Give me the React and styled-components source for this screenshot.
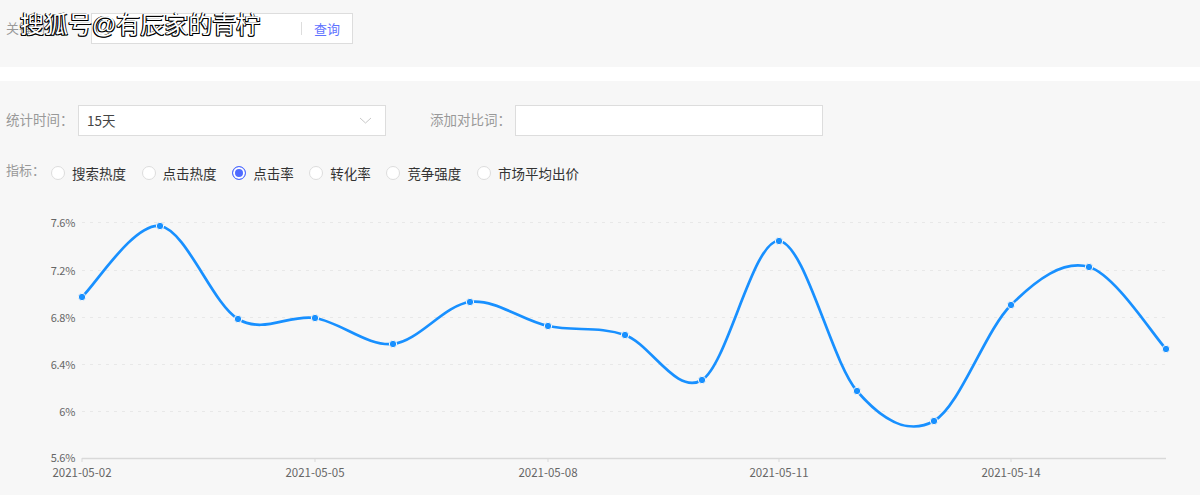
import React from 'react';
import styled, { createGlobalStyle } from 'styled-components';

const FONT = '"Noto Sans CJK SC", "Noto Sans", sans-serif';

const GlobalStyle = createGlobalStyle`
  html, body {
    margin: 0;
    padding: 0;
    background: #f7f7f7;
    font-family: ${FONT};
    overflow: hidden;
  }
`;

const metrics = [
  { name: '搜索热度' },
  { name: '点击热度' },
  { name: '点击率', checked: true },
  { name: '转化率' },
  { name: '竞争强度' },
  { name: '市场平均出价' },
];

const points = [
  [82, 297], [160, 226], [238, 319], [315, 318], [393, 344],
  [470, 302], [548, 326], [625, 335], [702, 380], [779, 241],
  [857, 391], [934, 421], [1011, 305], [1089, 267], [1166, 349],
];

const yTicks = [
  ['7.6%', 222], ['7.2%', 270], ['6.8%', 317], ['6.4%', 364], ['6%', 411],
];

const xTicks = [
  ['2021-05-02', 82], ['2021-05-05', 315], ['2021-05-08', 548],
  ['2021-05-11', 779], ['2021-05-14', 1011],
];

// catmull-rom to bezier, good enough for the smooth line
const smoothPath = (pts) => {
  let d = `M${pts[0][0]} ${pts[0][1]}`;
  for (let i = 0; i < pts.length - 1; i++) {
    const p0 = pts[Math.max(i - 1, 0)];
    const p1 = pts[i];
    const p2 = pts[i + 1];
    const p3 = pts[Math.min(i + 2, pts.length - 1)];
    const c1x = p1[0] + (p2[0] - p0[0]) / 6;
    const c1y = p1[1] + (p2[1] - p0[1]) / 6;
    const c2x = p2[0] - (p3[0] - p1[0]) / 6;
    const c2y = p2[1] - (p3[1] - p1[1]) / 6;
    d += ` C${c1x} ${c1y} ${c2x} ${c2y} ${p2[0]} ${p2[1]}`;
  }
  return d;
};

const Chart = () => (
  <ChartSvg viewBox="0 0 1200 310" width="1200" height="310">
    <g transform="translate(0 -185)">
      {yTicks.map(([label, y]) => (
        <g key={label}>
          <line x1="82" x2="1166" y1={y + 0.5} y2={y + 0.5} stroke="#e8e8e8" strokeDasharray="3 5" />
          <YLabel x="75" y={y + 5} textAnchor="end">{label}</YLabel>
        </g>
      ))}
      <YLabel x="75" y="462" textAnchor="end">5.6%</YLabel>
      <line x1="82" x2="1166" y1="458.5" y2="458.5" stroke="#d9d9d9" strokeWidth="1.5" />
      {xTicks.map(([label, x]) => (
        <g key={label}>
          <line x1={x} x2={x} y1="458" y2="462" stroke="#d9d9d9" />
          <AxisText x={x} y="477" textAnchor="middle">{label}</AxisText>
        </g>
      ))}
      <path d={smoothPath(points)} fill="none" stroke="#1890ff" strokeWidth="2.7" />
      {points.map(([x, y]) => (
        <circle key={x} cx={x} cy={y} r="3.7" fill="#1890ff" stroke="#f7f7f7" strokeWidth="1" />
      ))}
    </g>
  </ChartSvg>
);

const App = () => {
  return (
    <Page>
      <GlobalStyle />
      <TopBar>
        <TopLabel>关键词：</TopLabel>
        <SearchBox>
          <SearchInput />
          <SearchButton>查询</SearchButton>
        </SearchBox>
        <Watermark>搜狐号@有辰家的青柠</Watermark>
      </TopBar>
      <Divider />
      <FilterRow>
        <FieldLabel>统计时间：</FieldLabel>
        <SelectBox>
          <span>15天</span>
          <svg width="13" height="7" viewBox="0 0 13 7" fill="none">
            <path d="M1 1L6.5 6L12 1" stroke="#c8c8c8" strokeWidth="1" />
          </svg>
        </SelectBox>
        <CompareLabel>添加对比词：</CompareLabel>
        <CompareInput />
      </FilterRow>
      <MetricRow>
        <MetricLabel>指标：</MetricLabel>
        {metrics.map((m) => (
          <Metric key={m.name}>
            <Radio $checked={m.checked} />
            {m.name}
          </Metric>
        ))}
      </MetricRow>
      <Chart />
    </Page>
  );
};

const Page = styled.div`
  width: 1200px;
  height: 495px;
  overflow: hidden;
  background: #f7f7f7;
`;

const TopBar = styled.div`
  position: relative;
  height: 67px;
  box-sizing: border-box;
  padding: 13px 0 0 6px;
  display: flex;
  align-items: flex-start;
`;

const TopLabel = styled.span`
  width: 85px;
  font-size: 13px;
  line-height: 30px;
  color: #999;
`;

const SearchBox = styled.div`
  width: 262px;
  height: 31px;
  box-sizing: border-box;
  border: 1px solid #ddd;
  background: #fff;
  display: flex;
  align-items: center;
`;

const SearchInput = styled.div`
  flex: 1;
  height: 13px;
  border-right: 1px solid #ddd;
`;

const SearchButton = styled.span`
  width: 50px;
  text-align: center;
  font-size: 13px;
  color: #5f73ff;
`;

const Watermark = styled.div`
  position: absolute;
  left: 20px;
  top: 8px;
  font-family: "Liberation Sans", "Noto Sans CJK SC", sans-serif;
  font-size: 24px;
  line-height: 34px;
  white-space: nowrap;
  color: #fff;
  text-shadow: -1px 0 0 #000, -1px 1px 0 #000, 0 1px 0 #000, 1px 1px 0 #000;
`;

const Divider = styled.div`
  height: 14px;
  background: #fff;
`;

const FilterRow = styled.div`
  height: 31px;
  margin-top: 24px;
  padding-left: 6px;
  display: flex;
  align-items: center;
`;

const FieldLabel = styled.span`
  width: 72px;
  margin-top: -3px;
  font-size: 13.5px;
  color: #999;
  white-space: nowrap;
`;

const SelectBox = styled.div`
  width: 308px;
  height: 31px;
  box-sizing: border-box;
  border: 1px solid #ddd;
  background: #fff;
  padding: 0 13px 1px 8px;
  display: flex;
  align-items: center;
  justify-content: space-between;
  font-size: 13.5px;
  color: #444;
`;

const CompareLabel = styled(FieldLabel)`
  width: 85px;
  margin-left: 44px;
`;

const CompareInput = styled.div`
  width: 308px;
  height: 31px;
  box-sizing: border-box;
  border: 1px solid #ddd;
  background: #fff;
`;

const MetricRow = styled.div`
  height: 24px;
  margin-top: 25px;
  padding-left: 6px;
  display: flex;
  align-items: center;
`;

const MetricLabel = styled.span`
  width: 45px;
  font-size: 13px;
  color: #999;
  margin-top: -8px;
`;

const Metric = styled.label`
  display: flex;
  align-items: center;
  gap: 7px;
  margin-right: 15.6px;
  font-size: 13.5px;
  color: #333;
  white-space: nowrap;
`;

const Radio = styled.span`
  width: 14px;
  height: 14px;
  box-sizing: border-box;
  border-radius: 50%;
  background: ${(p) => (p.$checked ? '#4f6bff' : '#fff')};
  border: 1px solid ${(p) => (p.$checked ? '#4f6bff' : '#ddd')};
  box-shadow: ${(p) => (p.$checked ? 'inset 0 0 0 2px #fff' : 'none')};
`;

const ChartSvg = styled.svg`
  display: block;
`;

const AxisText = styled.text`
  font-family: ${FONT};
  font-size: 11.5px;
  fill: #666;
`;

const YLabel = styled(AxisText)`
  font-size: 11px;
  letter-spacing: -0.3px;
`;

export default App;
